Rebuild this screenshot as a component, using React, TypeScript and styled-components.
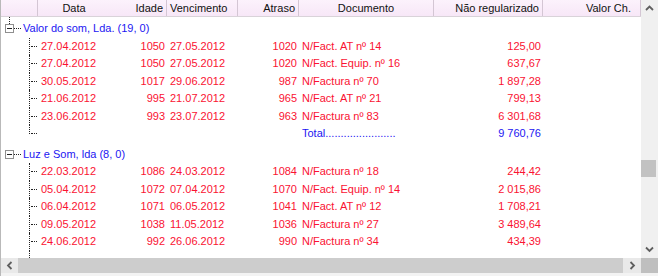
import styled, { createGlobalStyle } from "styled-components";

const GlobalStyle = createGlobalStyle`
  html, body { margin: 0; padding: 0; background: #fff; }
  body { font-family: "Liberation Sans", Arial, sans-serif; font-size: 11px; }
`;

// tree | Data | Idade | Vencimento | Atraso | Documento | Não regularizado | Valor Ch.
const COLS = "37px 73px 56px 71px 61px 135px 109px 98px";

const RED = "#fa1232";
const BLUE = "#1c16f2";

type Doc = {
  data: string;
  idade: string;
  venc: string;
  atraso: string;
  doc: string;
  valor: string;
};

type Group = { name: string; total?: string; rows: Doc[] };

const groups: Group[] = [
  {
    name: "Valor do som, Lda. (19, 0)",
    total: "9 760,76",
    rows: [
      { data: "27.04.2012", idade: "1050", venc: "27.05.2012", atraso: "1020", doc: "N/Fact. AT nº 14", valor: "125,00" },
      { data: "27.04.2012", idade: "1050", venc: "27.05.2012", atraso: "1020", doc: "N/Fact. Equip. nº 16", valor: "637,67" },
      { data: "30.05.2012", idade: "1017", venc: "29.06.2012", atraso: "987", doc: "N/Factura nº 70", valor: "1 897,28" },
      { data: "21.06.2012", idade: "995", venc: "21.07.2012", atraso: "965", doc: "N/Fact. AT nº 21", valor: "799,13" },
      { data: "23.06.2012", idade: "993", venc: "23.07.2012", atraso: "963", doc: "N/Factura nº 83", valor: "6 301,68" },
    ],
  },
  {
    name: "Luz e Som, lda (8, 0)",
    rows: [
      { data: "22.03.2012", idade: "1086", venc: "24.03.2012", atraso: "1084", doc: "N/Factura nº 18", valor: "244,42" },
      { data: "05.04.2012", idade: "1072", venc: "07.04.2012", atraso: "1070", doc: "N/Fact. Equip. nº 14", valor: "2 015,86" },
      { data: "06.04.2012", idade: "1071", venc: "06.05.2012", atraso: "1041", doc: "N/Fact. AT nº 12", valor: "1 708,21" },
      { data: "09.05.2012", idade: "1038", venc: "11.05.2012", atraso: "1036", doc: "N/Factura nº 27", valor: "3 489,64" },
      { data: "24.06.2012", idade: "992", venc: "26.06.2012", atraso: "990", doc: "N/Factura nº 34", valor: "434,39" },
    ],
  },
];

const Frame = styled.div`
  width: 658px;
  height: 276px;
  box-sizing: border-box;
  border-left: 1px solid #b9b9b9;
  display: grid;
  grid-template-columns: 640px 17px;
  grid-template-rows: 258px 15px 3px;
  background: #fff;
  overflow: hidden;
`;

const Table = styled.div`
  display: flex;
  flex-direction: column;
  overflow: hidden;
`;

const HeaderRow = styled.div`
  display: grid;
  grid-template-columns: ${COLS};
  height: 17px;
  flex: none;
  box-sizing: border-box;
  border-bottom: 1px solid #d9d3d9;
  background: linear-gradient(#fcf2fc, #f7e7f7);
`;

const HeadCell = styled.div<{ $align?: "left" | "right" | "center"; $pad?: number; $open?: boolean }>`
  border-right: 1px solid ${(p) => (p.$open ? "transparent" : "#d4c6d4")};
  line-height: 16px;
  padding: 0 ${(p) => p.$pad ?? 3}px 0 3px;
  text-align: ${(p) => p.$align ?? "left"};
  color: #111;
  white-space: nowrap;
  overflow: hidden;
`;

const Body = styled.div`
  flex: 1;
  display: flex;
  flex-direction: column;
`;

const GroupRow = styled.div<{ $lineAbove?: boolean }>`
  position: relative;
  display: flex;
  align-items: center;
  height: 20.5px;
  padding-top: 3px;
  box-sizing: border-box;
  flex: none;
  color: ${BLUE};
  &::before {
    content: "";
    display: ${(p) => (p.$lineAbove ? "block" : "none")};
    position: absolute;
    left: 8px;
    top: 0;
    height: 7px;
    border-left: 1px dotted #222;
  }
`;

const Expander = styled.div`
  width: 9px;
  height: 9px;
  margin-left: 4px;
  box-sizing: border-box;
  border: 1px solid #8f8f8f;
  background: #fff;
  display: flex;
  align-items: center;
  justify-content: center;
  &::after {
    content: "";
    width: 5px;
    border-top: 1px solid #222;
  }
`;

const Connector = styled.div`
  width: 7px;
  margin-right: 2px;
  border-top: 1px dotted #222;
`;

const GroupLabel = styled.span`
  line-height: 17.5px;
  white-space: nowrap;
`;

const Row = styled.div<{ $tone: "red" | "blue" }>`
  display: grid;
  grid-template-columns: ${COLS};
  height: 17.5px;
  flex: none;
  color: ${(p) => (p.$tone === "red" ? RED : BLUE)};
`;

const Branch = styled.div<{ $last?: boolean }>`
  position: relative;
  &::before {
    content: "";
    position: absolute;
    left: 28px;
    top: 0;
    height: ${(p) => (p.$last ? "9px" : "100%")};
    border-left: 1px dotted #222;
  }
  &::after {
    content: "";
    position: absolute;
    left: 30px;
    top: 8px;
    width: 6px;
    border-top: 1px dotted #222;
  }
`;

const TreeTail = styled.div`
  flex: 1;
  margin-left: 28px;
  border-left: 1px dotted #222;
`;

const Cell = styled.div<{ $align?: "left" | "right" }>`
  line-height: 17.5px;
  padding: ${(p) => (p.$align === "right" ? "0 2px 0 0" : "0 0 0 3px")};
  text-align: ${(p) => p.$align ?? "left"};
  white-space: nowrap;
  overflow: hidden;
`;

const VBar = styled.div`
  background: #f0f0f0;
  display: flex;
  flex-direction: column;
`;

const ArrowBtn = styled.div<{ $w?: number; $h?: number }>`
  width: ${(p) => (p.$w ? `${p.$w}px` : "auto")};
  height: ${(p) => (p.$h ? `${p.$h}px` : "auto")};
  flex: none;
  display: flex;
  align-items: center;
  justify-content: center;
`;

const VTrack = styled.div`
  flex: 1;
`;

const VThumb = styled.div`
  height: 17px;
  margin-right: 2px;
  background: #c2c2c2;
`;

const HBar = styled.div`
  display: flex;
  background: #e9e9e9;
`;

const HThumb = styled.div`
  flex: 1;
  background: #cdcdcd;
`;

const Corner = styled.div`
  background: #bfbfbf;
`;

const BottomStrip = styled.div`
  grid-column: 1 / -1;
  background: #f3f3f3;
`;

function Chevron({ dir }: { dir: "up" | "down" | "left" | "right" }) {
  const pts = {
    up: "1,5 4.5,1.5 8,5",
    down: "1,1.5 4.5,5 8,1.5",
    left: "5.5,1 2,4.5 5.5,8",
    right: "2.5,1 6,4.5 2.5,8",
  }[dir];
  const vertical = dir === "up" || dir === "down";
  return (
    <svg width={vertical ? 9 : 8} height={vertical ? 7 : 9} viewBox={vertical ? "0 0 9 7" : "0 0 8 9"}>
      <polyline points={pts} fill="none" stroke="#5f5f5f" strokeWidth="1.8" />
    </svg>
  );
}

export default function App() {
  const thumbTop = 143;
  return (
    <>
      <GlobalStyle />
      <Frame>
        <Table>
          <HeaderRow>
            <HeadCell />
            <HeadCell $align="center" $open>Data</HeadCell>
            <HeadCell $align="right">Idade</HeadCell>
            <HeadCell>Vencimento</HeadCell>
            <HeadCell $align="right">Atraso</HeadCell>
            <HeadCell $align="center">Documento</HeadCell>
            <HeadCell $align="right">Não regularizado</HeadCell>
            <HeadCell $align="right" $pad={9}>Valor Ch.</HeadCell>
          </HeaderRow>
          <Body>
            {groups.map((g, gi) => (
              <div key={g.name}>
                <GroupRow $lineAbove={gi === 0}>
                  <Expander />
                  <Connector />
                  <GroupLabel>{g.name}</GroupLabel>
                </GroupRow>
                {g.rows.map((r, ri) => (
                  <Row key={ri} $tone="red">
                    <Branch />
                    <Cell>{r.data}</Cell>
                    <Cell $align="right">{r.idade}</Cell>
                    <Cell>{r.venc}</Cell>
                    <Cell $align="right">{r.atraso}</Cell>
                    <Cell>{r.doc}</Cell>
                    <Cell $align="right">{r.valor}</Cell>
                    <Cell />
                  </Row>
                ))}
                {g.total && (
                  <Row $tone="blue">
                    <Branch $last />
                    <Cell />
                    <Cell />
                    <Cell />
                    <Cell />
                    <Cell>Total.......................</Cell>
                    <Cell $align="right">{g.total}</Cell>
                    <Cell />
                  </Row>
                )}
              </div>
            ))}
            <TreeTail />
          </Body>
        </Table>
        <VBar>
          <ArrowBtn $h={17}>
            <Chevron dir="up" />
          </ArrowBtn>
          <VTrack>
            <VThumb style={{ marginTop: thumbTop }} />
          </VTrack>
          <ArrowBtn $h={17}>
            <Chevron dir="down" />
          </ArrowBtn>
        </VBar>
        <HBar>
          <ArrowBtn $w={17}>
            <Chevron dir="left" />
          </ArrowBtn>
          <HThumb />
          <ArrowBtn $w={18}>
            <Chevron dir="right" />
          </ArrowBtn>
        </HBar>
        <Corner />
        <BottomStrip />
      </Frame>
    </>
  );
}
